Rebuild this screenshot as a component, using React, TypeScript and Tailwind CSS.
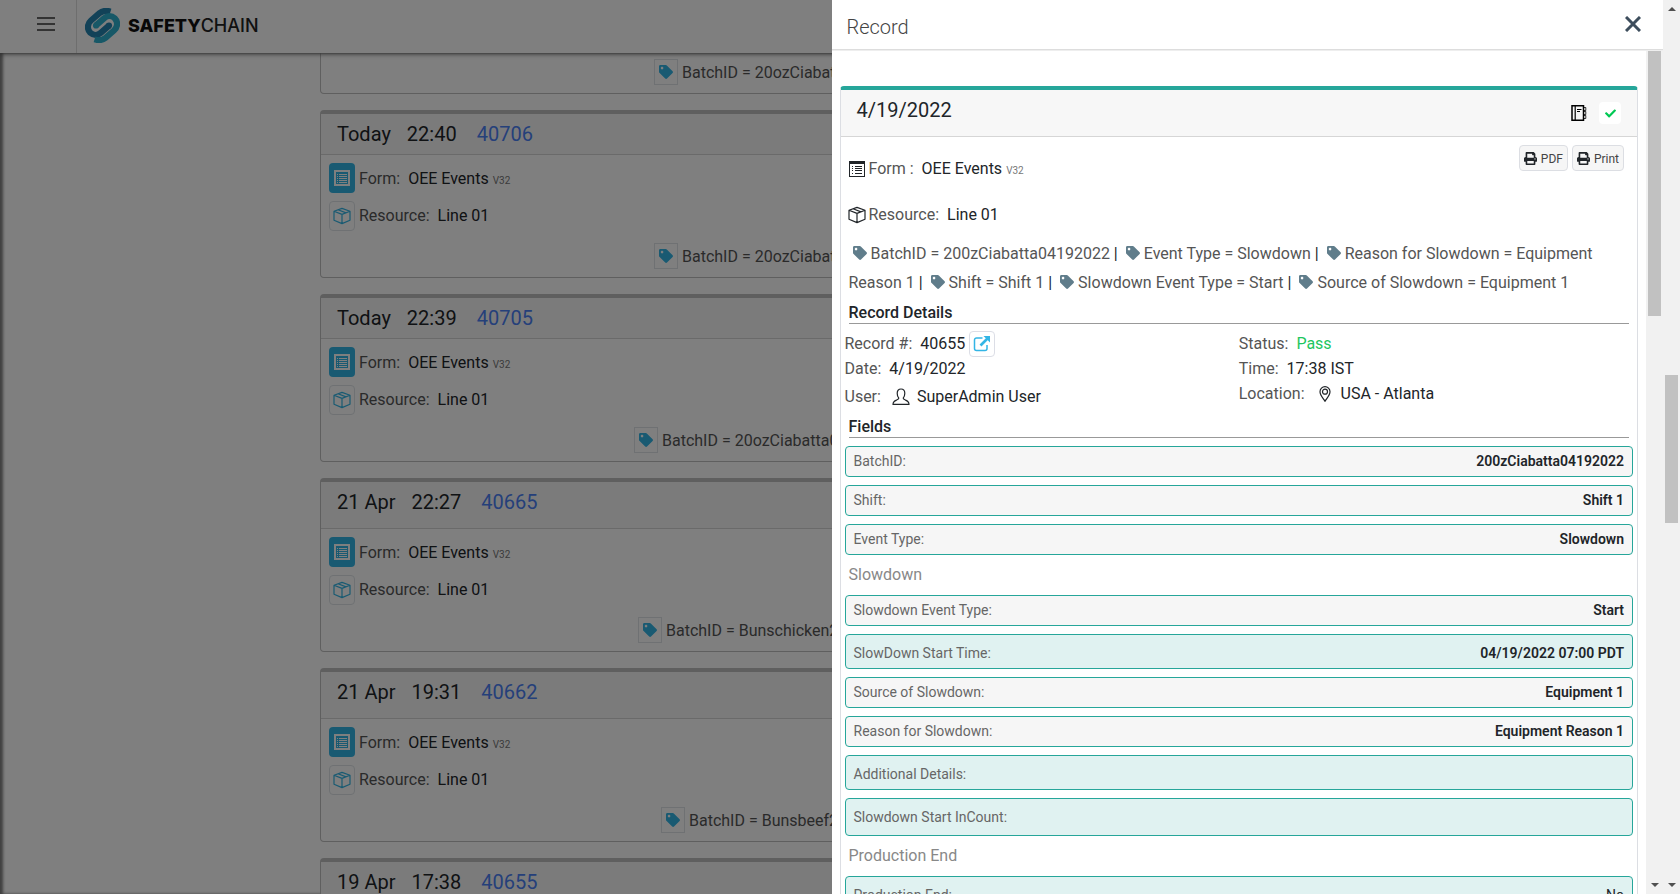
import React from 'react'
import { FaCheck, FaPrint, FaTag } from 'react-icons/fa'

function ListIcon({ className }: { className?: string }) {
  return (
    <svg viewBox="0 0 16 16" className={className} fill="currentColor" shapeRendering="crispEdges" aria-hidden="true">
      <path fillRule="evenodd" d="M0 0h16v16H0V0Zm1 3v12h14V3H1Z" />
      <path d="M3 5h1v1H3zM6 5h7v1H6zM3 7h1v1H3zM6 7h7v1H6zM3 9h1v1H3zM6 9h7v1H6zM3 12h1v1H3zM6 12h7v1H6z" />
    </svg>
  )
}

function GridListIcon({ className }: { className?: string }) {
  return (
    <svg viewBox="0 0 16 16" className={className} fill="currentColor" shapeRendering="crispEdges" aria-hidden="true">
      <path fillRule="evenodd" d="M0 0h16v16H0V0Zm2 2v12h12V2H2Z" />
      <path d="M3 4h1v1H3zM5 4h8v1H5zM3 6h1v1H3zM5 6h8v1H5zM3 8h1v1H3zM5 8h8v1H5zM3 10h1v1H3zM5 10h8v1H5zM3 12h1v1H3zM5 12h8v1H5z" />
    </svg>
  )
}

function BoxIcon({ className }: { className?: string }) {
  return (
    <svg viewBox="0 0 18 18" className={className} fill="none" stroke="currentColor" strokeWidth="1.200" strokeLinejoin="round" aria-hidden="true">
      <path d="M9 1.400 17 4.200v9L9 16.600 1 13.200v-9L9 1.400ZM1 4.200l8 3.200 8-3.200M9 7.400v9.200M5 2.800l8 3.100" />
    </svg>
  )
}

function UserIcon({ className }: { className?: string }) {
  return (
    <svg viewBox="0 0 18 18" className={className} fill="none" stroke="currentColor" strokeWidth="1.200" strokeLinejoin="round" aria-hidden="true">
      <path d="M6.800 10.200C5.600 8.800 5.200 7 5.200 5.200 5.200 2.600 6.700 1 9 1s3.800 1.600 3.800 4.200c0 1.800-.4 3.600-1.600 5 .2 1.200.9 1.400 2.300 1.900 2.200.8 3.500 1.900 3.500 4.300H1c0-2.400 1.300-3.500 3.500-4.300 1.400-.5 2.100-.7 2.300-1.900Z" />
    </svg>
  )
}

function PinIcon({ className }: { className?: string }) {
  return (
    <svg viewBox="0 0 16 16" className={className} fill="none" stroke="currentColor" strokeWidth="1.200" aria-hidden="true">
      <path d="M8 15.300C6.300 12.300 3 9.200 3 5.700a5 5 0 0 1 10 0c0 3.500-3.300 6.600-5 9.600Z" />
      <circle cx="8" cy="5.700" r="2.500" />
    </svg>
  )
}

function OpenIcon({ className }: { className?: string }) {
  return (
    <svg viewBox="0 0 18 18" className={className} fill="none" stroke="currentColor" strokeWidth="1.500" aria-hidden="true">
      <path d="M9.500 3H3.500A2 2 0 0 0 1.500 5v8.500a2 2 0 0 0 2 2H12a2 2 0 0 0 2-2V10" />
      <path d="m7.500 10.500 7-7" strokeWidth="2.600" />
      <path d="M10.500 1H17v6.500L10.500 1Z" fill="currentColor" stroke="none" />
    </svg>
  )
}

function BookIcon({ className }: { className?: string }) {
  return (
    <svg viewBox="0 0 16 16" className={className} fill="none" stroke="#000" aria-hidden="true">
      <path d="M1 .8h11.500v14.400H1z" strokeWidth="1.500" />
      <path d="M4.200 1v14" strokeWidth="1.200" />
      <path d="M6 4.500h4.500M6 6.500h3" />
      <path d="M13 2.500h1.800v3H13M13 6.500h1.800v3H13M13 10.500h1.800v3H13" strokeWidth=".8" />
    </svg>
  )
}

function Logo() {
  const link = 'M25.500 3.600C21.500 2.400 17.500 2.800 14.500 5.200L6 12.500C2 16 2 21.500 5.300 24.800c3.100 2.800 7.400 2.700 10.400.1l8.300-7.300'
  return (
    <svg viewBox="0 0 35 35" className="size-[35px]" fill="none" strokeWidth="6.200" aria-hidden="true">
      <path stroke="#2584b0" d={link} />
      <circle cx="24" cy="17.500" r="3.100" fill="#2584b0" stroke="none" />
      <g transform="rotate(180 17.500 17.500)">
        <path stroke="#2fb0cf" d={link} />
        <circle cx="24" cy="17.500" r="3.100" fill="#2fb0cf" stroke="none" />
      </g>
    </svg>
  )
}

type Entry = {
  day: string
  time: string
  id: string
  tag: string
  tagOffset: string
  header: string
}

const entries: Entry[] = [
  { day: 'Today', time: '22:40', id: '40706', tag: 'BatchID = 20ozCiabatta', tagOffset: 'ml-[325px]', header: 'h-[41px]' },
  { day: 'Today', time: '22:39', id: '40705', tag: 'BatchID = 20ozCiabatta04', tagOffset: 'ml-[305px]', header: 'h-[41px]' },
  { day: '21 Apr', time: '22:27', id: '40665', tag: 'BatchID = Bunschicken2022', tagOffset: 'ml-[309px]', header: 'h-[47px]' },
  { day: '21 Apr', time: '19:31', id: '40662', tag: 'BatchID = Bunsbeef2022', tagOffset: 'ml-[332px]', header: 'h-[47px]' },
  { day: '19 Apr', time: '17:38', id: '40655', tag: 'BatchID = 200zCiabatta04192022', tagOffset: 'ml-[305px]', header: 'h-[47px]' },
]

function Tag({ text, offset }: { text: string; offset: string }) {
  return (
    <div className={`flex items-center gap-1 whitespace-nowrap ${offset}`}>
      <span className="flex h-[26px] w-6 items-center justify-center border border-[#dee2e6] text-[#33b5e5]">
        <FaTag className="size-3.5" />
      </span>
      <span className="pt-0.5 text-[#555]">{text}</span>
    </div>
  )
}

function EntryCard({ entry }: { entry: Entry }) {
  return (
    <article className="rounded border border-t-4 border-[#bfbfbf] bg-white">
      <header className={`flex items-start gap-4 border-b border-[#d4d4d4] bg-[#f7f7f7] pt-1.5 pl-4 text-xl leading-7 ${entry.header}`}>
        <span>{entry.day}</span>
        <span>{entry.time}</span>
        <a href="#record" className="ml-1 text-[#4a80f5]">{entry.id}</a>
      </header>
      <div className="flex flex-col gap-2 px-2 pt-2">
        <div className="flex items-center">
          <span className="flex h-[30px] w-[26px] items-center justify-center rounded bg-[#33b5e5] text-white">
            <GridListIcon className="size-4" />
          </span>
          <span className="ml-1 pt-0.5 text-[#555]">Form:</span>
          <span className="ml-2 pt-0.5">OEE Events</span>
          <span className="ml-1 pt-1.5 text-[10px] text-[#777]">V32</span>
        </div>
        <div className="flex items-center">
          <span className="flex h-[30px] w-[26px] items-center justify-center rounded border border-[#dee2e6] text-[#33b5e5]">
            <BoxIcon className="size-[18px]" />
          </span>
          <span className="ml-1 text-[#555]">Resource:</span>
          <span className="ml-2">Line 01</span>
        </div>
      </div>
      <div className="pt-3 pb-2 pl-2">
        <Tag text={entry.tag} offset={entry.tagOffset} />
      </div>
    </article>
  )
}

const tags = [
  'BatchID = 200zCiabatta04192022',
  'Event Type = Slowdown',
  'Reason for Slowdown = Equipment Reason 1',
  'Shift = Shift 1',
  'Slowdown Event Type = Start',
  'Source of Slowdown = Equipment 1',
]

const sizes = {
  short: 'h-[31px] bg-[#f6f6f6] pb-0.5',
  medium: 'h-[35px] bg-[#e0f2f1] pt-0.5',
  tall: 'h-[38px] bg-[#e0f2f1]',
}

function Field({ label, value, size = 'short', light = false }: { label: string; value?: string; size?: keyof typeof sizes; light?: boolean }) {
  return (
    <div className={`flex shrink-0 items-center justify-between rounded border border-[#26a69a] px-2 text-sm ${sizes[size]}`}>
      <dt className="text-[#666]">{label}</dt>
      <dd className={light ? '' : 'font-semibold'}>{value}</dd>
    </div>
  )
}

function SectionTitle({ children }: { children: React.ReactNode }) {
  return <h3 className="mx-1 border-b border-[#999] leading-5 font-medium">{children}</h3>
}

function Arrow({ up = false }: { up?: boolean }) {
  return (
    <svg viewBox="0 0 8 4" className="h-1 w-2 shrink-0" fill="#505050" aria-hidden="true">
      <path d={up ? 'M0 4 4 0l4 4z' : 'm0 0 4 4 4-4z'} />
    </svg>
  )
}

function Background() {
  return (
    <div className="flex h-full flex-col bg-white">
      <header className="z-10 flex h-[53px] shrink-0 bg-white shadow-[0_1px_5px_rgba(0,0,0,0.5)]">
        <button type="button" aria-label="Menu" className="flex w-[77px] items-start justify-end border-r border-[#dcdcdc] pt-[17px] pr-[21px]">
          <svg viewBox="0 0 18 14" className="h-3.5 w-[18px]" stroke="#666" strokeWidth="2" aria-hidden="true">
            <path d="M0 1h18M0 7h18M0 13h18" />
          </svg>
        </button>
        <a href="#home" className="flex items-center gap-2 pb-0.5 pl-2 font-['Inter',sans-serif] text-lg font-medium text-[#222]">
          <Logo />
          <span><b className="font-extrabold text-[#111]">SAFETY</b>CHAIN</span>
        </a>
      </header>
      <main className="flex min-h-0 flex-1 flex-col overflow-hidden pr-[10%] pl-80 shadow-[inset_3px_0_3px_rgba(0,0,0,0.5)]">
        <div className="flex flex-col gap-4">
          <div className="shrink-0 rounded-b border border-t-0 border-[#bfbfbf] pt-1.5 pb-2 pl-2">
            <Tag text="BatchID = 20ozCiabatta" offset="ml-[325px]" />
          </div>
          {entries.map((entry) => <EntryCard key={entry.id} entry={entry} />)}
        </div>
      </main>
    </div>
  )
}

function RecordCard() {
  return (
    <article className="min-w-0 flex-1 rounded border border-t-4 border-[#dcdee3] border-t-[#26a69a] bg-white">
      <header className="flex h-[47px] items-center justify-between border-b border-[#d6d6d6] bg-[#f7f7f7] px-4">
        <h2 className="pb-1.5 text-xl leading-7">4/19/2022</h2>
        <div className="flex items-center gap-3">
          <button type="button" aria-label="Log book"><BookIcon className="size-4" /></button>
          <span className="flex size-[22px] items-center justify-center rounded bg-white text-[#00c853]">
            <FaCheck className="size-[11px]" />
          </span>
        </div>
      </header>
      <div className="px-1 pt-2">
        <div className="flex items-start justify-between pr-[9px]">
          <div className="flex items-center pt-[10px] pl-1 leading-6">
            <ListIcon className="size-4" />
            <span className="ml-1 text-[#555]">Form :</span>
            <span className="ml-2">OEE Events</span>
            <span className="ml-1 pt-1 text-[10px] text-[#777]">V32</span>
          </div>
          <div className="flex gap-1 text-xs text-[#444]">
            <button type="button" className="flex h-[26px] items-center gap-1 rounded border border-[#dcdee3] bg-[#f6f6f6] px-1 pt-px"><FaPrint className="size-[13px] text-[#212529]" />PDF</button>
            <button type="button" className="flex h-[26px] items-center gap-1 rounded border border-[#dcdee3] bg-[#f6f6f6] px-1 pt-px"><FaPrint className="size-[13px] text-[#212529]" />Print</button>
          </div>
        </div>
        <div className="flex items-center pt-5 pl-[3px] leading-6">
          <BoxIcon className="size-[18px]" />
          <span className="ml-[3px] text-[#555]">Resource:</span>
          <span className="ml-2">Line 01</span>
        </div>
        <p className="px-1 pt-3 leading-[29px] text-[#555]">
          {tags.map((tag, index) => (
            <React.Fragment key={tag}>
              <FaTag className="mx-1 inline size-3.5 align-[-1px] text-[#607d8b]" />
              {tag}
              {index < tags.length - 1 && <span className="text-[#212529]"> | </span>}
            </React.Fragment>
          ))}
        </p>
        <div className="pt-1.5"><SectionTitle>Record Details</SectionTitle></div>
        <div className="grid grid-cols-2 pt-[7px]">
          <div>
            <div className="flex h-[26px] items-center gap-2">
              <span className="text-[#555]">Record #:</span>
              <span className="flex items-center gap-1">
                40655
                <a href="#record" aria-label="Open record" className="flex size-[26px] items-center justify-center rounded border border-[#dcdee6] text-[#33b5e5]">
                  <OpenIcon className="size-[18px]" />
                </a>
              </span>
            </div>
            <div className="flex h-6 items-center gap-2"><span className="text-[#555]">Date:</span>4/19/2022</div>
            <div className="flex h-8 items-center gap-[7px]"><span className="mr-1 text-[#555]">User:</span><UserIcon className="size-[18px]" />SuperAdmin User</div>
          </div>
          <div>
            <div className="flex h-[25px] items-center gap-2"><span className="text-[#555]">Status:</span><span className="text-[#1ec660]">Pass</span></div>
            <div className="flex h-[25px] items-center gap-2"><span className="text-[#555]">Time:</span>17:38 IST</div>
            <div className="flex h-[25px] items-center gap-2"><span className="mr-1 text-[#555]">Location:</span><PinIcon className="size-4" />USA - Atlanta</div>
          </div>
        </div>
        <div className="pt-1"><SectionTitle>Fields</SectionTitle></div>
        <dl className="flex flex-col gap-2 pt-2">
          <Field label="BatchID:" value="200zCiabatta04192022" />
          <Field label="Shift:" value="Shift 1" />
          <Field label="Event Type:" value="Slowdown" />
        </dl>
        <h4 className="px-1 py-2 leading-6 text-[#888]">Slowdown</h4>
        <dl className="flex flex-col gap-2">
          <Field label="Slowdown Event Type:" value="Start" />
          <Field label="SlowDown Start Time:" value="04/19/2022 07:00 PDT" size="medium" />
          <Field label="Source of Slowdown:" value="Equipment 1" />
          <Field label="Reason for Slowdown:" value="Equipment Reason 1" />
          <Field label="Additional Details:" size="medium" />
          <Field label="Slowdown Start InCount:" size="tall" />
        </dl>
        <h4 className="px-1 py-2 leading-6 text-[#888]">Production End</h4>
        <dl className="flex flex-col gap-2">
          <Field label="Production End:" value="No" size="medium" light />
        </dl>
      </div>
    </article>
  )
}

export default function App() {
  return (
    <div className="flex h-screen overflow-hidden font-['Roboto',sans-serif] text-base leading-6 text-[#212529]">
      <div className="relative min-w-0 flex-1 overflow-hidden">
        <Background />
        <div className="absolute inset-0 z-20 bg-black/50" />
        <section aria-label="Record" className="absolute inset-y-0 right-0 z-30 flex w-1/2 flex-col bg-white">
          <header className="z-10 flex h-[50px] shrink-0 items-center justify-between border-b border-[#ddd] pr-[22px] pl-[15px] shadow-[0_1px_0_#eee]">
            <h1 className="pt-1 text-xl leading-7 font-light text-[#444]">Record</h1>
            <button type="button" aria-label="Close" className="mb-0.5">
              <svg viewBox="0 0 16 16" className="size-4" stroke="#3d4d5c" strokeWidth="3" aria-hidden="true">
                <path d="m1 1 14 14M15 1 1 15" />
              </svg>
            </button>
          </header>
          <div className="flex min-h-0 flex-1 overflow-hidden">
            <div className="flex min-w-0 flex-1 items-start px-2 pt-9">
              <RecordCard />
            </div>
            <div className="flex w-[17px] shrink-0 flex-col items-center justify-between bg-[#f1f1f1] pb-[7px]">
              <div className="h-[266px] w-[13px] bg-[#c1c1c1]" />
              <Arrow />
            </div>
          </div>
        </section>
      </div>
      <div className="flex w-[17px] shrink-0 flex-col items-center bg-[#f1f1f1] py-[7px]">
        <Arrow up />
        <div className="min-h-0 flex-[364]" />
        <div className="min-h-0 w-[13px] flex-[148] bg-[#c1c1c1]" />
        <div className="min-h-0 flex-[360]" />
        <Arrow />
      </div>
    </div>
  )
}
